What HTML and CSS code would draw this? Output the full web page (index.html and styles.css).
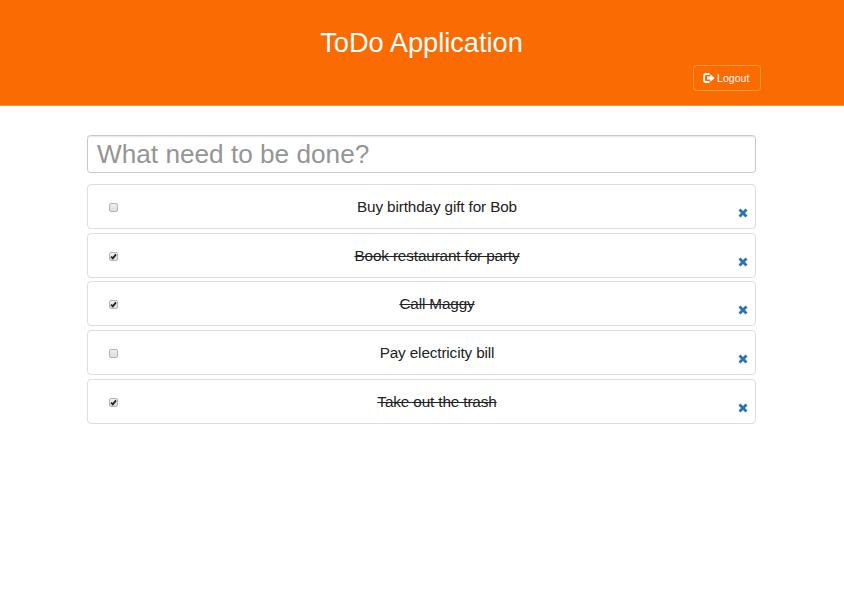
FILE: index.html
```html
<!DOCTYPE html>
<html lang="en">
<head>
<meta charset="utf-8">
<title>ToDo Application</title>
<link rel="stylesheet" href="styles.css">
</head>
<body>
<svg class="sprite" aria-hidden="true">
  <symbol id="check" viewBox="0 0 10 10"><path d="M2.3 5.1 4.2 7 7.8 2.6" fill="none" stroke="#222" stroke-width="2"/></symbol>
  <symbol id="remove" viewBox="0 0 10 10"><path d="M2.5.5 5 3 7.5.5 9.5 2.5 7 5 9.5 7.5 7.5 9.5 5 7 2.5 9.5.5 7.5 3 5 .5 2.5z" fill="#2b73b7"/></symbol>
</svg>
<header class="header">
  <h1 class="title">ToDo Application</h1>
  <button class="logout" type="button">
    <svg class="logout-icon" viewBox="0 0 12 10"><path d="M6.5 1H3Q1 1 1 3v4q0 2 2 2h3.5" fill="none" stroke="#fff" stroke-width="1.8"/><path d="M4 3.5h3.3V1.2L11.7 5 7.3 8.8V6.5H4z" fill="#fff"/></svg>
    <span>Logout</span>
  </button>
</header>
<main class="main">
  <input class="new-todo" type="text" placeholder="What need to be done?">
  <ul class="list">
    <li class="item"><span class="box"></span><span class="label">Buy birthday gift for Bob</span><svg class="remove"><use href="#remove"/></svg></li>
    <li class="item done"><span class="box"><svg><use href="#check"/></svg></span><span class="label">Book restaurant for party</span><svg class="remove"><use href="#remove"/></svg></li>
    <li class="item done"><span class="box"><svg><use href="#check"/></svg></span><span class="label">Call Maggy</span><svg class="remove"><use href="#remove"/></svg></li>
    <li class="item"><span class="box"></span><span class="label">Pay electricity bill</span><svg class="remove"><use href="#remove"/></svg></li>
    <li class="item done"><span class="box"><svg><use href="#check"/></svg></span><span class="label">Take out the trash</span><svg class="remove"><use href="#remove"/></svg></li>
  </ul>
</main>
</body>
</html>
```
FILE: styles.css
```css
* { box-sizing: border-box; }
body {
  margin: 0;
  background: #fff;
  color: #222;
  font-family: "Liberation Sans", Arial, sans-serif;
}
.sprite { display: none; }
.header {
  height: 106px;
  padding: 27px 83px 0 82px;
  background: #fa6b02;
  border-bottom: 1px solid #fa8a38;
  display: flex;
  flex-direction: column;
}
.title {
  margin: 0;
  height: 38px;
  color: #fff;
  font-size: 27.2px;
  font-weight: 400;
  line-height: 32px;
  text-align: center;
}
.logout {
  align-self: flex-end;
  width: 68px;
  height: 26px;
  padding: 0 0 0 9px;
  display: flex;
  align-items: center;
  gap: 2px;
  border: 1px solid #fb9a35;
  border-radius: 3.5px;
  background: transparent;
  color: #fff;
  font: 10.6px "Liberation Sans", Arial, sans-serif;
}
.logout-icon { width: 12px; height: 10px; margin-top: -1px; }
.main { margin: 29px 88px 0 87px; }
.new-todo {
  display: block;
  width: 100%;
  height: 38px;
  padding: 0 9px;
  border: 1px solid #c8c8c8;
  border-radius: 3.5px;
  box-shadow: inset 0 1px 1px rgba(0, 0, 0, .1);
  font: 26.2px "Liberation Sans", Arial, sans-serif;
}
.new-todo::placeholder { color: #959595; opacity: 1; }
.list {
  margin: 11px 0 0;
  padding: 0;
  list-style: none;
  display: flex;
  flex-direction: column;
  gap: 3.7px;
}
.item {
  height: 45px;
  padding: 0 6.5px 0 21px;
  border: 1px solid #ddd;
  border-radius: 4px;
  display: grid;
  grid-template-columns: 9px 1fr 11px;
  align-items: center;
}
.box {
  width: 9px;
  height: 9px;
  margin-top: 2px;
  border: 1px solid #b4b4b4;
  border-radius: 2px;
  background: linear-gradient(#eee, #ddd);
}
.box svg { display: block; width: 9px; height: 9px; margin: -1px; }
.label {
  padding-top: 1px;
  padding-left: 18.5px;
  font-size: 15.3px;
  letter-spacing: -.13px;
  line-height: 20px;
  text-align: center;
}
.done .label { text-decoration: line-through; }
.remove { width: 10px; height: 10px; margin-top: 13px; }
```
